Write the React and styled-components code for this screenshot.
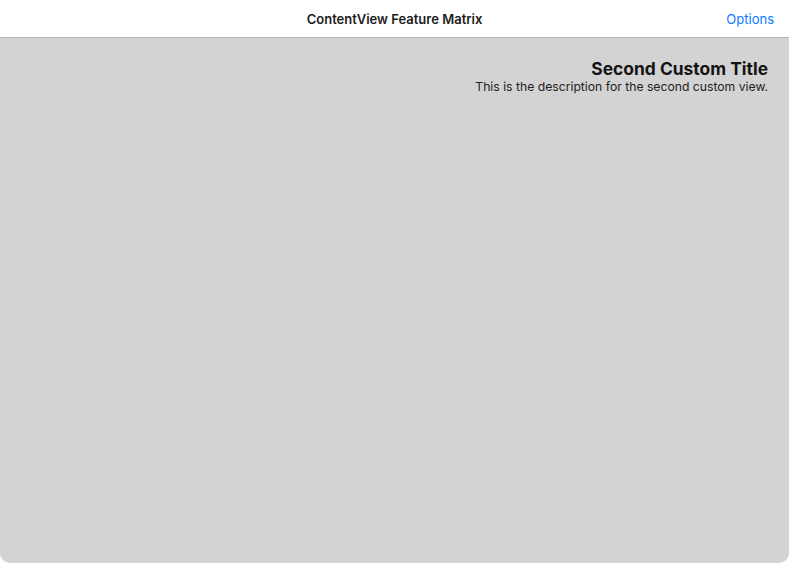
import React from "react";
import styled, { createGlobalStyle } from "styled-components";

const Global = createGlobalStyle`
  html, body { margin: 0; padding: 0; background: #ffffff; }
  body { font-family: Inter, "Noto Sans", sans-serif; -webkit-font-smoothing: antialiased; }
  #root { height: 563px; }
`;

const Page = styled.div`
  display: flex;
  flex-direction: column;
  height: 563px;
  width: 789px;
  background: #ffffff;
`;

const NavBar = styled.header`
  position: relative;
  height: 37px;
  flex: 0 0 37px;
  display: flex;
  align-items: center;
  justify-content: center;
  border-bottom: 1px solid #b4b4b4;
  background: #ffffff;
`;

const NavTitle = styled.div`
  font-size: 13px;
  font-weight: 600;
  color: #1c1c1c;
  letter-spacing: 0;
`;

const NavAction = styled.button`
  position: absolute;
  right: 15px;
  top: 50%;
  transform: translateY(-50%);
  border: none;
  background: none;
  padding: 0;
  font-family: inherit;
  font-size: 13px;
  color: #0a7aff;
  cursor: pointer;
`;

const Panel = styled.main`
  flex: 1;
  background: #d3d3d3;
  border-radius: 0 0 10px 10px;
  display: flex;
  flex-direction: column;
  align-items: flex-end;
  padding: 20px 21px 0 0;
`;

const Title = styled.h1`
  margin: 0;
  font-size: 17.4px;
  line-height: 21px;
  font-weight: 700;
  color: #141414;
`;

const Description = styled.p`
  margin: 0;
  font-size: 12.2px;
  line-height: 15px;
  color: #222222;
`;

export default function App() {
  return (
    <>
      <Global />
      <Page>
        <NavBar>
          <NavTitle>ContentView Feature Matrix</NavTitle>
          <NavAction>Options</NavAction>
        </NavBar>
        <Panel>
          <Title>Second Custom Title</Title>
          <Description>This is the description for the second custom view.</Description>
        </Panel>
      </Page>
    </>
  );
}
